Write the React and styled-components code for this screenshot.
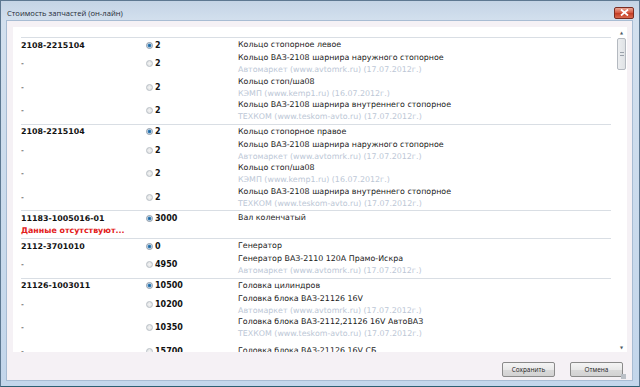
import styled, { createGlobalStyle } from "styled-components"

const GlobalStyle = createGlobalStyle`
html, body {
    margin: 0;
    padding: 0;
    background: #2d5f73;
}
* { box-sizing: border-box; }
`

const groups = [
    {
        code: "2108-2215104", price: "2", name: "Кольцо стопорное левое",
        offers: [
            { price: "2", name: "Кольцо ВАЗ-2108 шарнира наружного стопорное", src: "Автомаркет (www.avtomrk.ru) (17.07.2012г.)" },
            { price: "2", name: "Кольцо стоп/ша08", src: "КЭМП (www.kemp1.ru) (16.07.2012г.)" },
            { price: "2", name: "Кольцо ВАЗ-2108 шарнира внутреннего стопорное", src: "ТЕХКОМ (www.teskom-avto.ru) (17.07.2012г.)" },
        ],
    },
    {
        code: "2108-2215104", price: "2", name: "Кольцо стопорное правое",
        offers: [
            { price: "2", name: "Кольцо ВАЗ-2108 шарнира наружного стопорное", src: "Автомаркет (www.avtomrk.ru) (17.07.2012г.)" },
            { price: "2", name: "Кольцо стоп/ша08", src: "КЭМП (www.kemp1.ru) (16.07.2012г.)" },
            { price: "2", name: "Кольцо ВАЗ-2108 шарнира внутреннего стопорное", src: "ТЕХКОМ (www.teskom-avto.ru) (17.07.2012г.)" },
        ],
    },
    { code: "11183-1005016-01", price: "3000", name: "Вал коленчатый", missing: true, offers: [] },
    {
        code: "2112-3701010", price: "0", name: "Генератор",
        offers: [
            { price: "4950", name: "Генератор ВАЗ-2110 120А Прамо-Искра", src: "Автомаркет (www.avtomrk.ru) (17.07.2012г.)" },
        ],
    },
    {
        code: "21126-1003011", price: "10500", name: "Головка цилиндров",
        offers: [
            { price: "10200", name: "Головка блока ВАЗ-21126 16V", src: "Автомаркет (www.avtomrk.ru) (17.07.2012г.)" },
            { price: "10350", name: "Головка блока ВАЗ-2112,21126 16V АвтоВАЗ", src: "ТЕХКОМ (www.teskom-avto.ru) (17.07.2012г.)" },
            { price: "15700", name: "Головка блока ВАЗ-21126 16V СБ", src: "" },
        ],
    },
]

const App = () => {
    return (
        <>
            <GlobalStyle />
            <Window>
                <TitleBar>
                    <Title>Стоимость запчастей (он-лайн)</Title>
                    <CloseButton>
                        <svg width="9" height="7" viewBox="0 0 9 7">
                            <path d="M1 0.5 L8 6.5 M8 0.5 L1 6.5" stroke="#fff" strokeWidth="1.8" />
                        </svg>
                    </CloseButton>
                </TitleBar>
                <Client>
                    <Panel>
                        <List>
                            {groups.map((g, i) => (
                                <Group key={i}>
                                    <MainRow>
                                        <Code>{g.code}</Code>
                                        <Price><Radio $checked />{g.price}</Price>
                                        <Name>{g.name}</Name>
                                    </MainRow>
                                    {g.missing && <Missing>Данные отсутствуют...</Missing>}
                                    {g.offers.map((o, j) => (
                                        <OfferRow key={j}>
                                            <Code $dash>-</Code>
                                            <Price><Radio />{o.price}</Price>
                                            <OfferText>
                                                <Name>{o.name}</Name>
                                                <Source>{o.src}</Source>
                                            </OfferText>
                                        </OfferRow>
                                    ))}
                                </Group>
                            ))}
                        </List>
                        <ScrollBar>
                            <Arrow>▲</Arrow>
                            <Track>
                                <Thumb>
                                    <Grip />
                                </Thumb>
                            </Track>
                            <Arrow>▼</Arrow>
                        </ScrollBar>
                    </Panel>
                    <Footer>
                        <Button>Сохранить</Button>
                        <Button>Отмена</Button>
                        <ResizeGrip />
                    </Footer>
                </Client>
            </Window>
        </>
    )
}

export default App

const Window = styled.div`
width: 640px;
height: 387px;
display: flex;
flex-direction: column;
background: linear-gradient(#c4d4e5, #d3e0ee 20px, #c3d6eb);
border: 1px solid #5d7891;
border-bottom: 1px solid #2d5f73;
overflow: hidden;
font-family: "DejaVu Sans", Verdana, sans-serif;
`

const TitleBar = styled.div`
height: 19px;
flex: none;
display: flex;
align-items: center;
justify-content: space-between;
padding: 0 5px 0 6px;
`

const Title = styled.div`
font-family: "Open Sans", "Noto Sans", sans-serif;
font-size: 7.6px;
color: #1e2a36;
padding-top: 5px;
`

const CloseButton = styled.div`
width: 20px;
height: 12px;
margin-top: 4px;
border: 1px solid #7a2d22;
border-radius: 2px;
background: linear-gradient(#e9a795, #d5533c 50%, #c23a22 51%, #d9694e);
display: flex;
align-items: center;
justify-content: center;
`

const Client = styled.div`
flex: 1;
margin: 0 6px 5px 5px;
background: #f5f1f5;
border: 1px solid #a8bcd3;
display: flex;
flex-direction: column;
padding: 6px 5px 0 6px;
`

const Panel = styled.div`
height: 325px;
flex: none;
background: #fff;
display: flex;
`

const List = styled.div`
flex: 1;
overflow: hidden;
padding: 10px 5px 0 8px;
`

const Group = styled.div`
border-top: 1px solid #d9dee4;
padding-bottom: 1px;
`

const Row = styled.div`
display: grid;
grid-template-columns: 125px 92px 1fr;
align-items: center;
`

const MainRow = styled(Row)`
height: 14px;
`

const OfferRow = styled(Row)`
height: 23.5px;
`

const Code = styled.div`
font-size: 7.9px;
color: #111;
font-weight: ${p => (p.$dash ? "normal" : "bold")};
`

const Price = styled.div`
display: flex;
align-items: center;
gap: 2px;
font-size: 8px;
font-weight: bold;
color: #111;
`

const Radio = styled.span`
width: 7px;
height: 7px;
border-radius: 50%;
border: 1px solid ${p => (p.$checked ? "#8b99a8" : "#b9bfc6")};
background: ${p => (p.$checked
    ? "radial-gradient(circle, #1f5f93 0, #3b86c0 1.5px, #dfe7ef 2.3px)"
    : "radial-gradient(circle, #f4f4f4, #dadddf)")};
`

const OfferText = styled.div`
display: flex;
flex-direction: column;
`

const Name = styled.div`
font-size: 7.9px;
line-height: 12px;
color: #1a1a1a;
white-space: nowrap;
`

const Source = styled.div`
font-size: 7.9px;
line-height: 11.5px;
color: #bcc7d6;
white-space: nowrap;
`

const Missing = styled.div`
height: 12px;
font-size: 7.9px;
line-height: 12px;
font-weight: bold;
color: #e3211b;
`

const ScrollBar = styled.div`
width: 11px;
margin: 2px 0 0;
display: flex;
flex-direction: column;
`

const Arrow = styled.div`
height: 8px;
font-size: 4px;
color: #505a66;
text-align: center;
line-height: 8px;
`

const Track = styled.div`
flex: 1;
padding-top: 1px;
`

const Thumb = styled.div`
height: 32px;
margin: 0 1px;
border: 1px solid #b4b9c0;
border-radius: 2px;
background: linear-gradient(90deg, #eceef0, #dfe2e5);
display: flex;
align-items: center;
justify-content: center;
`

const Grip = styled.div`
width: 4px;
height: 4px;
border-top: 1px solid #9aa1aa;
border-bottom: 1px solid #9aa1aa;
`

const Footer = styled.div`
flex: 1;
position: relative;
display: flex;
justify-content: flex-end;
align-items: flex-start;
gap: 15px;
padding: 10px 4px 0 0;
`

const Button = styled.div`
width: 53px;
height: 15px;
border: 1px solid #8a8a8a;
border-radius: 2px;
background: linear-gradient(#f4f4f4, #e9e9e9 50%, #dadada 51%, #d2d2d2);
font-family: "Open Sans", "Noto Sans", sans-serif;
font-size: 6.4px;
color: #222;
display: flex;
align-items: center;
justify-content: center;
`

const ResizeGrip = styled.div`
position: absolute;
right: 1px;
bottom: 1px;
width: 5px;
height: 5px;
background: radial-gradient(circle, #b9bec5 0.7px, transparent 0.9px) 0 0 / 2px 2px;
`
